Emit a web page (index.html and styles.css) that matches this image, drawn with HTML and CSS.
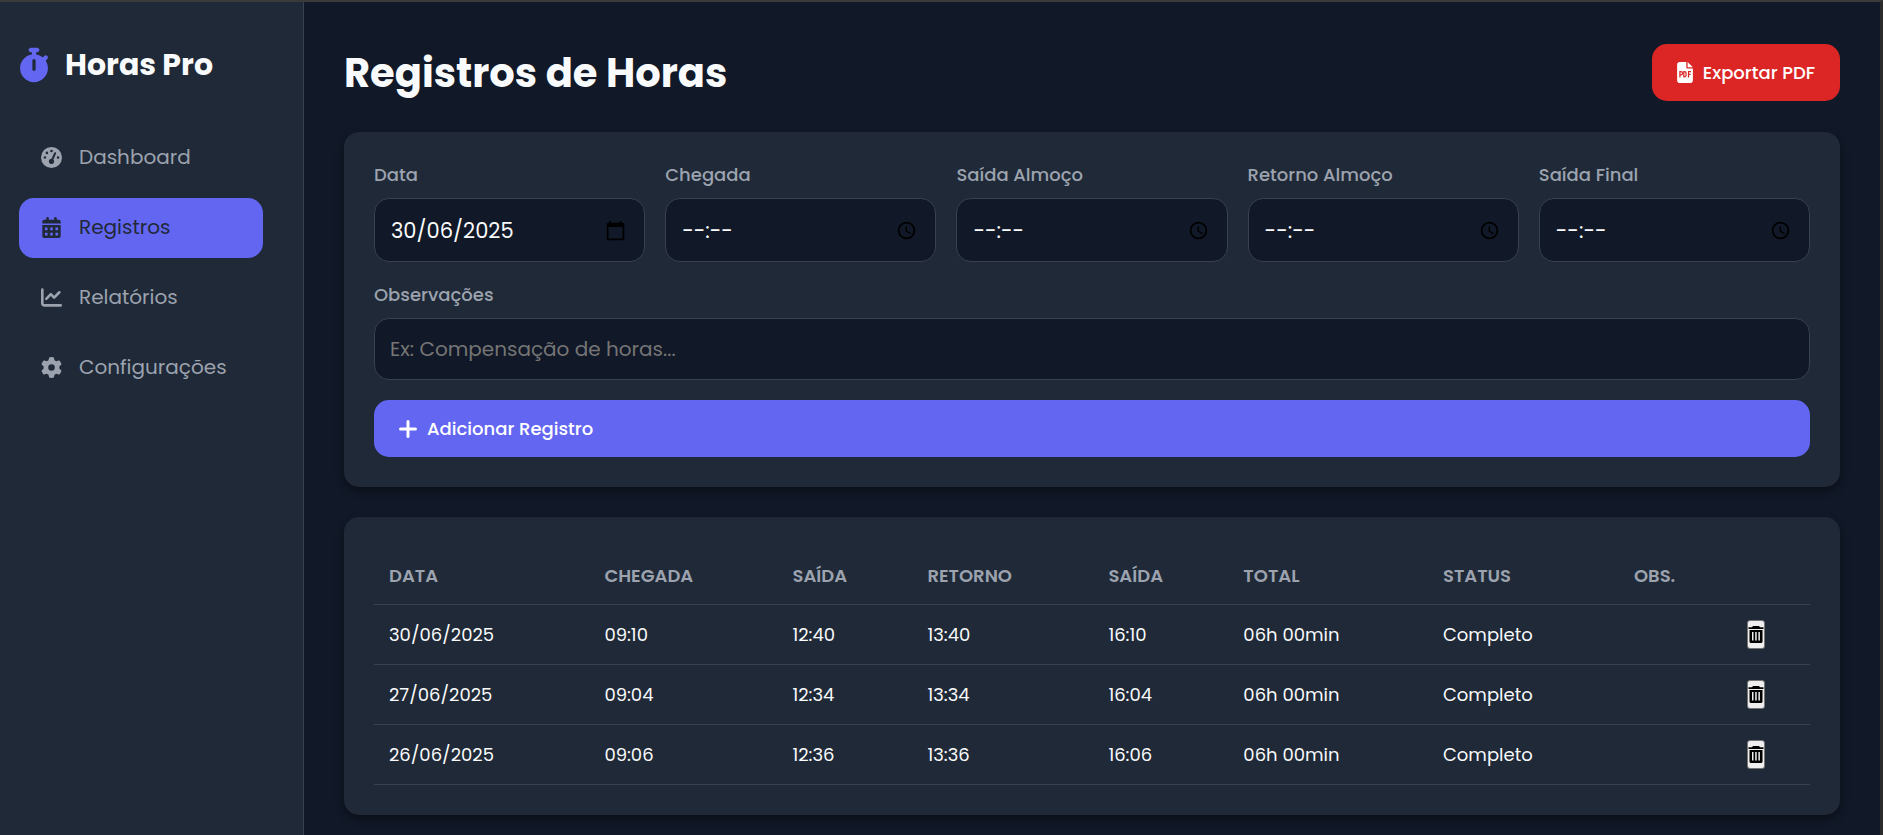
FILE: index.html
```html
<!DOCTYPE html>
<html lang="pt-BR">
<head>
<meta charset="utf-8">
<meta name="viewport" content="width=device-width, initial-scale=1">
<title>Horas Pro</title>
<link rel="stylesheet" href="styles.css">
</head>
<body>
<svg class="sprite" aria-hidden="true">
  <symbol id="clock" viewBox="0 0 24 24"><path d="M12 2a10 10 0 1 0 0 20 10 10 0 0 0 0-20zm0 18a8 8 0 1 1 0-16 8 8 0 0 1 0 16zm.5-13H11v6l5.200 3.200.8-1.300-4.500-2.700z"/></symbol>
  <symbol id="calendar" viewBox="0 0 24 24"><path d="M20 3h-1V1h-2v2H7V1H5v2H4a2 2 0 0 0-2 2v16a2 2 0 0 0 2 2h16a2 2 0 0 0 2-2V5a2 2 0 0 0-2-2zm0 18H4V8h16z"/></symbol>
  <symbol id="trash" viewBox="0 0 16 18"><path d="M5 0h6l1 1.200h3.500v1.800H.5V1.200H4z"/><path fill-rule="evenodd" d="M1.500 4h13v11.500a1.500 1.500 0 0 1-1.500 1.500H3a1.500 1.500 0 0 1-1.500-1.500zM4 6v8.500h1.500V6zm3.200 0v8.500h1.500V6zm3.200 0v8.500h1.500V6z"/></symbol>
</svg>
<div class="app">
  <aside class="sidebar">
    <div class="brand">
      <svg class="brand-icon" viewBox="0 0 448 512" aria-hidden="true"><path d="M176 0c-17.700 0-32 14.300-32 32s14.300 32 32 32h16v34.400C92.300 113.800 16 200 16 304c0 114.900 93.100 208 208 208s208-93.100 208-208c0-41.800-12.300-80.700-33.500-113.200l24.100-24.100c12.500-12.500 12.500-32.800 0-45.300s-32.800-12.500-45.300 0l-21.800 21.800c-28-23-62-39-99.500-44.800V64h16c17.700 0 32-14.300 32-32S289.700 0 272 0zm72 192v128c0 13.300-10.700 24-24 24s-24-10.700-24-24V192c0-13.300 10.700-24 24-24s24 10.700 24 24z"/></svg>
      <span>Horas Pro</span>
    </div>
    <nav class="nav">
      <a href="#dashboard" class="nav-item">
        <svg viewBox="0 0 512 512" aria-hidden="true"><path fill-rule="evenodd" d="M0 256a256 256 0 1 1 512 0A256 256 0 1 1 0 256zM288 96a32 32 0 1 0-64 0 32 32 0 1 0 64 0zM256 416c35.300 0 64-28.700 64-64 0-17.400-6.900-33.100-18.100-44.600L366 161.700c5.300-12.100-.2-26.300-12.300-31.600s-26.300.2-31.600 12.300L257.900 288H256c-35.300 0-64 28.700-64 64s28.700 64 64 64zM176 144a32 32 0 1 0-64 0 32 32 0 1 0 64 0zM96 288a32 32 0 1 0 0-64 32 32 0 1 0 0 64zm352-32a32 32 0 1 0-64 0 32 32 0 1 0 64 0z"/></svg>
        <span>Dashboard</span>
      </a>
      <a href="#registros" class="nav-item active" aria-current="page">
        <svg viewBox="-32 0 512 512" aria-hidden="true"><path fill-rule="evenodd" d="M128 0c17.700 0 32 14.300 32 32v32h128V32c0-17.700 14.300-32 32-32s32 14.300 32 32v32h48c26.500 0 48 21.500 48 48v48H0v-48c0-26.500 21.500-48 48-48h48V32c0-17.700 14.300-32 32-32zM0 192h448v272c0 26.500-21.500 48-48 48H48c-26.500 0-48-21.500-48-48zm64 64v64h64v-64zm128 0v64h64v-64zm128 0v64h64v-64zM64 384v64h64v-64zm128 0v64h64v-64zm128 0v64h64v-64z"/></svg>
        <span>Registros</span>
      </a>
      <a href="#relatorios" class="nav-item">
        <svg viewBox="0 0 512 512" aria-hidden="true"><path d="M64 64a32 32 0 0 0-64 0v336c0 44.200 35.800 80 80 80h400a32 32 0 0 0 0-64H80c-8.800 0-16-7.200-16-16zm406.600 86.600a32 32 0 0 0-45.200-45.200L320 210.700l-57.400-57.300a32 32 0 0 0-45.200 0l-112 112a32 32 0 0 0 45.200 45.200l89.400-89.300 57.400 57.300a32 32 0 0 0 45.200 0z"/></svg>
        <span>Relatórios</span>
      </a>
      <a href="#configuracoes" class="nav-item">
        <svg viewBox="0 0 512 512" aria-hidden="true"><path fill-rule="evenodd" d="M495.900 166.600c3.200 8.700.5 18.400-6.400 24.600l-43.300 39.400a195 195 0 0 1 0 50.800l43.300 39.400c6.900 6.200 9.600 15.900 6.400 24.600a256 256 0 0 1-15.800 34.300l-4.700 8.100a249 249 0 0 1-22.100 31.200c-5.900 7.200-15.700 9.600-24.500 6.800l-55.700-17.700a195 195 0 0 1-44 25.400l-12.500 57.100c-2 9.100-9 16.300-18.200 17.800a257 257 0 0 1-84.700 0c-9.200-1.500-16.200-8.700-18.200-17.800l-12.500-57.100a195 195 0 0 1-44-25.400l-55.600 17.800c-8.800 2.800-18.600.3-24.500-6.800a249 249 0 0 1-22.100-31.200l-4.700-8.100a256 256 0 0 1-15.800-34.300c-3.200-8.700-.5-18.400 6.400-24.600l43.300-39.400a195 195 0 0 1 0-50.900l-43.300-39.400c-6.900-6.200-9.600-15.900-6.400-24.600a256 256 0 0 1 15.800-34.300l4.700-8.100a249 249 0 0 1 22.100-31.200c5.900-7.200 15.700-9.600 24.500-6.800l55.700 17.700a195 195 0 0 1 44-25.400l12.500-57.100c2-9.100 9-16.300 18.200-17.800a257 257 0 0 1 84.600 0c9.200 1.500 16.200 8.700 18.200 17.800l12.500 57.100a195 195 0 0 1 44 25.400l55.700-17.700c8.800-2.800 18.600-.3 24.500 6.800a249 249 0 0 1 22.100 31.200l4.700 8.100a256 256 0 0 1 15.800 34.300zM256 336a80 80 0 1 0 0-160 80 80 0 1 0 0 160z"/></svg>
        <span>Configurações</span>
      </a>
    </nav>
  </aside>
  <main class="main">
    <header class="header">
      <h1>Registros de Horas</h1>
      <button type="button" class="btn btn-danger">
        <svg class="pdf-icon" viewBox="0 0 384 512" aria-hidden="true"><path d="M64 0C28.700 0 0 28.700 0 64v384c0 35.300 28.700 64 64 64h256c35.300 0 64-28.700 64-64V160H256c-17.700 0-32-14.300-32-32V0zm192 0v128h128z"/><path class="pdf-mark" d="M68 376V232h24a38 38 0 0 1 0 82H68M164 232v128h16c24 0 38-14 38-36v-56c0-22-14-36-38-36zM278 376V232h60M278 302h50"/></svg>
        <span>Exportar PDF</span>
      </button>
    </header>
    <section class="card">
      <form class="form">
        <div class="field">
          <label for="data">Data</label>
          <div class="picker"><input id="data" type="text" value="30/06/2025"><button type="button" aria-label="Abrir calendário"><svg viewBox="0 0 24 24"><use href="#calendar"/></svg></button></div>
        </div>
        <div class="field">
          <label for="chegada">Chegada</label>
          <div class="picker"><input id="chegada" type="text" value="--:--"><button type="button" aria-label="Escolher chegada"><svg viewBox="0 0 24 24"><use href="#clock"/></svg></button></div>
        </div>
        <div class="field">
          <label for="saida-almoco">Saída Almoço</label>
          <div class="picker"><input id="saida-almoco" type="text" value="--:--"><button type="button" aria-label="Escolher saída para almoço"><svg viewBox="0 0 24 24"><use href="#clock"/></svg></button></div>
        </div>
        <div class="field">
          <label for="retorno">Retorno Almoço</label>
          <div class="picker"><input id="retorno" type="text" value="--:--"><button type="button" aria-label="Escolher retorno do almoço"><svg viewBox="0 0 24 24"><use href="#clock"/></svg></button></div>
        </div>
        <div class="field">
          <label for="saida-final">Saída Final</label>
          <div class="picker"><input id="saida-final" type="text" value="--:--"><button type="button" aria-label="Escolher saída final"><svg viewBox="0 0 24 24"><use href="#clock"/></svg></button></div>
        </div>
        <div class="field wide">
          <label for="obs">Observações</label>
          <input id="obs" class="text-input" type="text" placeholder="Ex: Compensação de horas...">
        </div>
        <button type="button" class="btn btn-primary wide">
          <svg class="plus-icon" viewBox="0 0 18 18" aria-hidden="true"><path d="M9 1.500v15M1.500 9h15"/></svg>
          <span>Adicionar Registro</span>
        </button>
      </form>
    </section>
    <section class="card">
      <table class="records">
        <colgroup><col class="c-date"><col class="c-in"><col class="c-out"><col class="c-back"><col class="c-end"><col class="c-total"><col class="c-status"><col class="c-obs"><col></colgroup>
        <thead>
          <tr><th>Data</th><th>Chegada</th><th>Saída</th><th>Retorno</th><th>Saída</th><th>Total</th><th>Status</th><th>Obs.</th><th></th></tr>
        </thead>
        <tbody>
          <tr><td>30/06/2025</td><td>09:10</td><td>12:40</td><td>13:40</td><td>16:10</td><td>06h 00min</td><td>Completo</td><td></td><td><button type="button" class="delete" aria-label="Excluir"><svg viewBox="0 0 16 18"><use href="#trash"/></svg></button></td></tr>
          <tr><td>27/06/2025</td><td>09:04</td><td>12:34</td><td>13:34</td><td>16:04</td><td>06h 00min</td><td>Completo</td><td></td><td><button type="button" class="delete" aria-label="Excluir"><svg viewBox="0 0 16 18"><use href="#trash"/></svg></button></td></tr>
          <tr><td>26/06/2025</td><td>09:06</td><td>12:36</td><td>13:36</td><td>16:06</td><td>06h 00min</td><td>Completo</td><td></td><td><button type="button" class="delete" aria-label="Excluir"><svg viewBox="0 0 16 18"><use href="#trash"/></svg></button></td></tr>
        </tbody>
      </table>
    </section>
  </main>
</div>
</body>
</html>
```
FILE: styles.css
```css
:root {
  --bg: #111827;
  --surface: #1f2937;
  --line: #374151;
  --muted: #9ca3af;
  --text: #f9fafb;
  --primary: #6366f1;
  --danger: #dc2626;
  --frame: #3a3a3a;
}

* { box-sizing: border-box; }

body {
  margin: 0;
  background: var(--bg);
  color: var(--text);
  font-family: Poppins, Inter, sans-serif;
  font-size: 18px;
}

button, input { font: inherit; }

.sprite { display: none; }

.app {
  display: flex;
  min-height: 100vh;
  border-top: 2px solid var(--frame);
  border-right: 3px solid #2b2b2b;
}

.sidebar {
  flex: none;
  width: 304px;
  padding: 40px 40px 40px 19px;
  background: var(--surface);
  border-right: 1px solid var(--line);
}

.brand {
  display: flex;
  align-items: center;
  gap: 16px;
  height: 46px;
  margin-bottom: 40px;
  font-size: 30px;
  font-weight: 700;
}

.brand-icon {
  width: 30px;
  height: 36px;
  fill: var(--primary);
}

.nav {
  display: flex;
  flex-direction: column;
  gap: 10px;
}

.nav-item {
  display: flex;
  align-items: center;
  gap: 17px;
  height: 60px;
  padding: 0 22px 2px;
  border-radius: 15px;
  color: var(--muted);
  font-size: 20px;
  text-decoration: none;
}

.nav-item svg {
  width: 21px;
  height: 21px;
  fill: currentColor;
}

.nav-item.active {
  background: var(--primary);
  color: var(--surface);
}

.main {
  flex: 1;
  display: flex;
  flex-direction: column;
  gap: 30px;
  min-width: 0;
  padding: 42px 40px 10px;
}

.header {
  display: flex;
  justify-content: space-between;
  align-items: flex-start;
}

h1 {
  margin: 0;
  font-size: 40px;
  line-height: 58px;
  font-weight: 700;
}

.btn {
  display: flex;
  align-items: center;
  gap: 10px;
  height: 57px;
  padding: 0 25px;
  border: 0;
  border-radius: 15px;
  color: #fff;
  font-weight: 500;
}

.btn-danger { background: var(--danger); }
.btn-primary { background: var(--primary); }

.pdf-icon {
  width: 16px;
  height: 21px;
  fill: #fff;
}

.pdf-mark {
  fill: none;
  stroke: var(--danger);
  stroke-width: 30px;
}

.plus-icon {
  width: 18px;
  height: 18px;
  fill: none;
  stroke: #fff;
  stroke-width: 3px;
  stroke-linecap: round;
}

.card {
  padding: 30px;
  background: var(--surface);
  border-radius: 15px;
  box-shadow: 0 4px 8px rgba(0, 0, 0, 0.4);
}

.form {
  display: grid;
  grid-template-columns: repeat(5, minmax(0, 1fr));
  gap: 20px;
}

.wide { grid-column: 1 / -1; }

.field {
  display: flex;
  flex-direction: column;
  gap: 10px;
}

.field label {
  color: var(--muted);
  line-height: 26px;
  font-weight: 500;
}

.picker, .text-input {
  background: var(--bg);
  border: 1px solid var(--line);
  border-radius: 15px;
  color: var(--text);
}

.text-input {
  width: 100%;
  height: 62px;
  padding: 0 15px;
  font-size: 20px;
}

.text-input::placeholder { color: #757575; }

.picker {
  display: flex;
  align-items: center;
  height: 64px;
  padding: 0 18px 0 16px;
  font-size: 21px;
}

.picker input {
  flex: 1;
  min-width: 0;
  padding: 0;
  border: 0;
  background: none;
  color: inherit;
}

.picker button {
  display: flex;
  padding: 0;
  border: 0;
  background: none;
}

.picker svg {
  width: 21px;
  height: 21px;
  fill: #000;
}

.records {
  width: 100%;
  table-layout: fixed;
  border-collapse: separate;
  border-spacing: 0;
}

.records th, .records td {
  height: 60px;
  padding: 0 15px;
  border-bottom: 1px solid var(--line);
  text-align: left;
}

.records th {
  height: 58px;
  color: var(--muted);
  font-weight: 600;
  text-transform: uppercase;
}

.c-date { width: 15%; }
.c-in { width: 13.1%; }
.c-out { width: 9.4%; }
.c-back { width: 12.6%; }
.c-end { width: 9.4%; }
.c-total { width: 13.9%; }
.c-status { width: 13.3%; }
.c-obs { width: 7.9%; }

.delete {
  display: flex;
  align-items: center;
  justify-content: center;
  width: 18px;
  height: 29px;
  padding: 0;
  background: #efefef;
  border: 1px solid #767676;
  border-radius: 3px;
}

.delete svg {
  flex: none;
  width: 16px;
  height: 18px;
  fill: #000;
}
```
